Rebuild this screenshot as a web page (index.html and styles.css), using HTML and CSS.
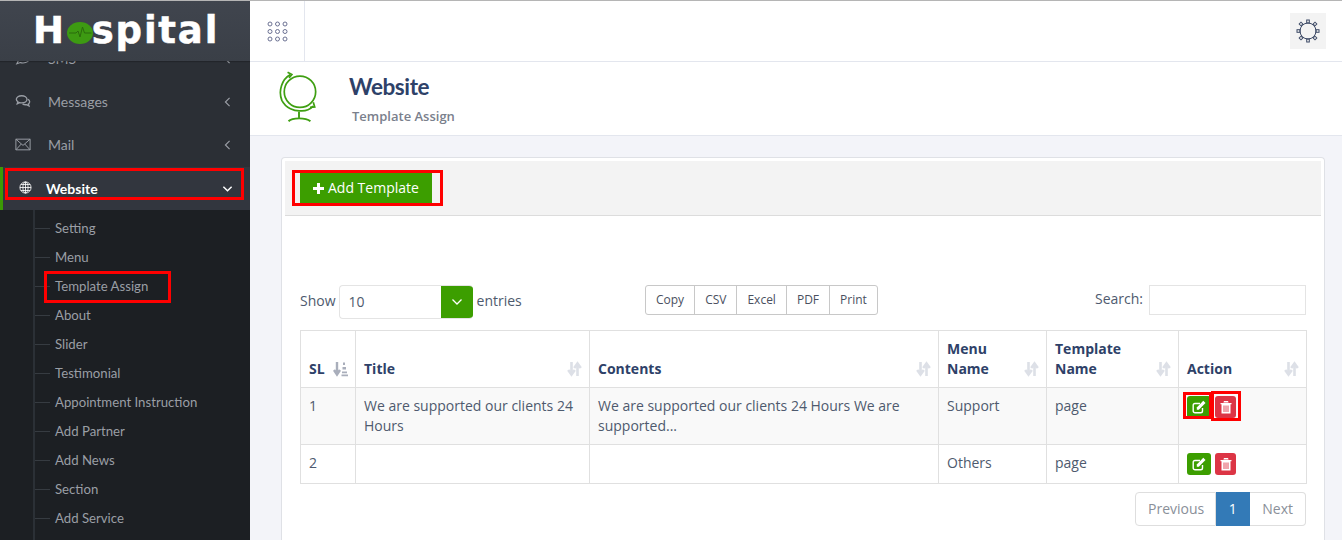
FILE: index.html
```html
<!DOCTYPE html>
<html lang="en">
<head>
<meta charset="utf-8">
<title>Website - Template Assign</title>
<link rel="stylesheet" href="styles.css">
</head>
<body>
<svg class="defs" width="0" height="0" aria-hidden="true">
  <symbol id="sort" viewBox="0 0 15 16">
    <path d="M4.500 1v11M1.200 9l3.300 4.500L7.800 9M10.500 15V4M7.200 7l3.300-4.500L13.800 7" fill="none" stroke="currentColor" stroke-width="2.600"/>
  </symbol>
  <symbol id="sort-on" viewBox="0 0 15 16">
    <path d="M4 1v11M1 9l3 4.500L7 9" fill="none" stroke="currentColor" stroke-width="2.400"/>
    <path d="M10 1.500h2v2.500h-2zM9.500 6h3.500v2.500H9.500zM9 10.500h5v1.800H9zM8.500 13.500h6.500v1.800H8.500z" fill="currentColor"/>
  </symbol>
  <symbol id="edit" viewBox="0 0 14 14">
    <path d="M10.500 8v3a1.800 1.800 0 0 1-1.800 1.800H3A1.800 1.800 0 0 1 1.200 11V5.300A1.800 1.800 0 0 1 3 3.500h5" fill="none" stroke="currentColor" stroke-width="1.400"/>
    <path d="M4.800 7.500 11.300.8l2.200 2.200-6.700 6.700H4.800z" fill="currentColor"/>
  </symbol>
  <symbol id="trash" viewBox="0 0 14 14">
    <path d="M1.500 3h11v1.200h-1V13.500h-9V4.200h-1zM5 1h4l.6 1.500H4.400z" fill="currentColor"/>
    <path d="M5 5.500v6.500M7 5.500v6.500M9 5.500v6.500" stroke="#dc3545" stroke-width=".9"/>
  </symbol>
</svg>
<div class="app">
  <aside class="sidebar">
    <div class="logo">
      <span class="logo-text">H</span>
      <svg class="logo-dot" viewBox="0 0 26 22" preserveAspectRatio="none"><ellipse cx="13" cy="11" rx="13" ry="11" fill="#3d9a12"/><path d="M2 11h7l2-2 2 6 2.500-10 2 6h7" fill="none" stroke="#2a6b0c" stroke-width="1"/></svg>
      <span class="logo-text logo-rest">spital</span>
    </div>
    <nav class="nav">
      <div class="nav-item">
        <svg class="nav-icon" viewBox="0 0 18 16"><path d="M9 2c4 0 7.500 2 7.500 5.500S13 13 9 13c-1 0-2 0-3-.5L2 14l1.500-3C2 10 1.500 9 1.500 7.500 1.500 4 5 2 9 2z" fill="none" stroke="currentColor" stroke-width="1.200"/></svg>
        <span class="nav-label">SMS</span>
        <svg class="nav-caret" viewBox="0 0 8 12"><path d="M6.500 1 1.500 6l5 5" fill="none" stroke="currentColor" stroke-width="1.400"/></svg>
      </div>
      <div class="nav-item">
        <svg class="nav-icon" viewBox="0 0 18 16"><path d="M7.500 1.500c3.300 0 6 1.700 6 4s-2.700 4-6 4c-.8 0-1.500-.1-2.200-.3L2.500 10.500l.8-2.200C2 7.500 1.500 6.500 1.500 5.500c0-2.300 2.700-4 6-4z" fill="none" stroke="currentColor" stroke-width="1.500"/><path d="M14.500 5.500c1.300.7 2 1.700 2 2.900 0 1-.6 1.900-1.500 2.500l.7 2.100-2.800-1.400c-1.600.2-3.200-.1-4.400-.9" fill="none" stroke="currentColor" stroke-width="1.500"/></svg>
        <span class="nav-label">Messages</span>
        <svg class="nav-caret" viewBox="0 0 8 12"><path d="M6.500 1 1.500 6l5 5" fill="none" stroke="currentColor" stroke-width="1.400"/></svg>
      </div>
      <div class="nav-item">
        <svg class="nav-icon" viewBox="0 0 18 14"><path d="M1 1h16v12H1zM1 1l8 7 8-7M1 13l6-6.500M17 13l-6-6.500" fill="none" stroke="currentColor" stroke-width="1.100"/></svg>
        <span class="nav-label">Mail</span>
        <svg class="nav-caret" viewBox="0 0 8 12"><path d="M6.500 1 1.500 6l5 5" fill="none" stroke="currentColor" stroke-width="1.400"/></svg>
      </div>
      <div class="nav-item nav-active">
        <svg class="nav-icon nav-globe" viewBox="0 0 14 14"><g fill="none" stroke="currentColor" stroke-width=".9"><circle cx="7" cy="7" r="6"/><ellipse cx="7" cy="7" rx="2.800" ry="6"/><path d="M1 7h12M2 3.800h10M2 10.200h10M7 1v12"/></g></svg>
        <span class="nav-label">Website</span>
        <svg class="nav-caret nav-down" viewBox="0 0 12 8"><path d="M1.500 1.500 6 6l4.500-4.500" fill="none" stroke="currentColor" stroke-width="1.600"/></svg>
        <span class="mark mark-website"></span>
      </div>
      <ul class="subnav">
        <li>Setting</li>
        <li>Menu</li>
        <li>Template Assign<span class="mark mark-assign"></span></li>
        <li>About</li>
        <li>Slider</li>
        <li>Testimonial</li>
        <li>Appointment Instruction</li>
        <li>Add Partner</li>
        <li>Add News</li>
        <li>Section</li>
        <li>Add Service</li>
      </ul>
    </nav>
  </aside>
  <div class="main">
    <header class="topbar">
      <div class="apps">
        <svg class="apps-icon" viewBox="0 0 21 21"><g fill="none" stroke="#6c7293" stroke-width="1"><circle cx="3" cy="3" r="2"/><circle cx="10.500" cy="3" r="2"/><circle cx="18" cy="3" r="2"/><circle cx="3" cy="10.500" r="2"/><circle cx="10.500" cy="10.500" r="2"/><circle cx="18" cy="10.500" r="2"/><circle cx="3" cy="18" r="2"/><circle cx="10.500" cy="18" r="2"/><circle cx="18" cy="18" r="2"/></g></svg>
      </div>
      <div class="settings">
        <svg class="settings-icon" viewBox="0 0 24 24"><g fill="none" stroke="#3d4a66" stroke-width="1"><circle cx="12" cy="12" r="8"/><rect x="10.700" y="1" width="2.600" height="3"/><rect x="10.700" y="20" width="2.600" height="3"/><rect x="1" y="10.700" width="3" height="2.600"/><rect x="20" y="10.700" width="3" height="2.600"/><rect x="3.700" y="3.700" width="2.600" height="2.600" transform="rotate(45 5 5)"/><rect x="17.700" y="3.700" width="2.600" height="2.600" transform="rotate(45 19 5)"/><rect x="3.700" y="17.700" width="2.600" height="2.600" transform="rotate(45 5 19)"/><rect x="17.700" y="17.700" width="2.600" height="2.600" transform="rotate(45 19 19)"/></g></svg>
      </div>
    </header>
    <section class="page-head">
      <svg class="page-icon" viewBox="0 0 42 52"><g fill="none" stroke="#3f9f12" stroke-width="1.800"><circle cx="22" cy="21" r="16.500"/><path d="M12 3C3 8-1 20 3 30c4 8 13 12 21 11 5 0 9-2 12-5"/><path d="M9 .5l4.500 2.500-3 3.500M36 32l1.500 5-5 .5"/><path d="M21 42v6M10 52c4-4 18-4 23 0" stroke-width="2"/></g></svg>
      <div class="page-titles">
        <h1 class="page-title">Website</h1>
        <p class="page-sub">Template Assign</p>
      </div>
    </section>
    <section class="content">
      <div class="card">
        <div class="card-head">
          <button class="btn-add"><svg class="plus" viewBox="0 0 11 11"><path d="M4 0h3v4h4v3H7v4H4V7H0V4h4z" fill="currentColor"/></svg>Add Template<span class="mark mark-add"></span></button>
        </div>
        <div class="card-body">
          <div class="tools">
            <div class="length">
              <span class="lbl">Show</span>
              <div class="select"><span class="select-value">10</span><span class="select-arrow"><svg viewBox="0 0 12 8"><path d="M1.500 1.500 6 6l4.500-4.500" fill="none" stroke="currentColor" stroke-width="1.300"/></svg></span></div>
              <span class="lbl">entries</span>
            </div>
            <div class="exports">
              <span class="export">Copy</span><span class="export">CSV</span><span class="export">Excel</span><span class="export">PDF</span><span class="export">Print</span>
            </div>
            <div class="search"><span class="lbl">Search:</span><span class="search-input"></span></div>
          </div>
          <table class="grid">
            <thead>
              <tr>
                <th class="c-sl">SL<svg class="sort sort-on"><use href="#sort-on"/></svg></th>
                <th class="c-title">Title<svg class="sort"><use href="#sort"/></svg></th>
                <th class="c-contents">Contents<svg class="sort"><use href="#sort"/></svg></th>
                <th class="c-menu">Menu<br>Name<svg class="sort"><use href="#sort"/></svg></th>
                <th class="c-template">Template<br>Name<svg class="sort"><use href="#sort"/></svg></th>
                <th class="c-action">Action<svg class="sort"><use href="#sort"/></svg></th>
              </tr>
            </thead>
            <tbody>
              <tr class="odd">
                <td>1</td>
                <td>We are supported our clients 24 Hours</td>
                <td>We are supported our clients 24 Hours We are supported...</td>
                <td>Support</td>
                <td>page</td>
                <td>
                  <div class="actions">
                    <span class="act act-edit"><svg><use href="#edit"/></svg><span class="mark mark-edit"></span></span>
                    <span class="act act-del"><svg><use href="#trash"/></svg><span class="mark mark-del"></span></span>
                  </div>
                </td>
              </tr>
              <tr>
                <td>2</td>
                <td></td>
                <td></td>
                <td>Others</td>
                <td>page</td>
                <td>
                  <div class="actions">
                    <span class="act act-edit"><svg><use href="#edit"/></svg></span>
                    <span class="act act-del"><svg><use href="#trash"/></svg></span>
                  </div>
                </td>
              </tr>
            </tbody>
          </table>
          <div class="pager">
            <span class="page-btn">Previous</span><span class="page-btn page-on">1</span><span class="page-btn">Next</span>
          </div>
        </div>
      </div>
    </section>
  </div>
</div>
</body>
</html>
```

FILE: styles.css
```css
* { box-sizing: border-box; }
html, body { margin: 0; height: 540px; overflow: hidden; }
body { font-family: "Open Sans", "Liberation Sans", sans-serif; font-size: 14px; color: #4e5a6e; background: #fff; }
.defs { position: absolute; }
.app { display: flex; height: 540px; overflow: hidden; border-top: 1px solid #b5b5b5; }

.sidebar { width: 250px; flex: none; background: #2b2f35; overflow: hidden; display: flex; flex-direction: column; }
.logo { height: 60px; flex: none; display: flex; align-items: center; padding-left: 33px; background: linear-gradient(#40454e, #3a3f47); position: relative; z-index: 1; box-shadow: 0 1px 1px rgba(0,0,0,.2); }
.logo-text { font-family: "DejaVu Sans", sans-serif; font-weight: 700; font-size: 37px; line-height: 40px; letter-spacing: .8px; color: #fff; -webkit-text-stroke: .5px #fff; }
.logo-rest { letter-spacing: 1.800px; }
.logo-dot { width: 26px; height: 22px; margin: 4px -1px 0 2px; flex: none; }
.nav { flex: 1; min-height: 0; display: flex; flex-direction: column; margin-top: -24px; font-family: Lato, sans-serif; font-size: 14px; overflow: hidden; }
.nav-item { height: 43px; flex: none; display: flex; align-items: center; padding: 0 19px 0 15px; color: #9a9ea5; position: relative; }
.nav-icon { width: 16px; height: 15px; flex: none; margin-right: 17px; }
.nav-label { flex: 1; }
.nav-caret { width: 7px; height: 10px; flex: none; }
.nav-active { margin-top: 1px; background: #32363e; color: #fff; font-weight: 700; border-left: 3px solid #3c9a05; padding-left: 16px; padding-right: 17px; }
.nav-active .nav-label { margin-bottom: 1px; }
.nav-globe { width: 13px; height: 13px; margin-right: 14px; margin-top: -2px; }
.nav-down { width: 11px; height: 8px; }
.subnav { flex: 1; list-style: none; margin: 0; padding: 4px 0 0 33px; background: #1c1f23; position: relative; color: #9a9ea5; overflow: hidden; }
.subnav::before { content: ""; position: absolute; left: 33px; top: 0; bottom: 0; width: 2px; background: #2b3036; }
.subnav li { height: 29px; line-height: 29px; padding-left: 22px; position: relative; white-space: nowrap; font-size: 13.200px; }
.subnav li::before { content: ""; position: absolute; left: 2px; top: 14px; width: 15px; height: 1px; background: #363b41; }

.mark { position: absolute; border: 3px solid #f00; pointer-events: none; }
.mark-website { left: 2px; top: 1px; width: 239px; height: 32px; }
.mark-assign { left: 11px; top: -1px; width: 127px; height: 32px; }
.mark-add { left: -8px; top: -2px; width: 151px; height: 36px; }
.mark-edit { left: -4px; top: -4px; width: 29px; height: 27px; }
.mark-del { left: -4px; top: -5px; width: 30px; height: 30px; }

.main { flex: 1; min-width: 0; display: flex; flex-direction: column; background: #f3f4f9; }
.topbar { height: 61px; flex: none; display: flex; justify-content: space-between; align-items: center; background: #fff; border-bottom: 1px solid #e3e6ee; padding-right: 16px; }
.apps { width: 55px; height: 60px; display: flex; align-items: center; justify-content: center; border-right: 1px solid #e3e6ee; }
.apps-icon { width: 21px; height: 21px; }
.settings { width: 36px; height: 36px; display: flex; align-items: center; justify-content: center; background: #f3f3f3; }
.settings-icon { width: 24px; height: 24px; }
.page-head { height: 74px; flex: none; display: flex; background: #fff; border-bottom: 1px solid #e3e6ee; padding: 8px 0 0 29px; }
.page-icon { width: 40px; height: 53px; flex: none; }
.page-titles { margin-left: 29px; }
.page-title { margin: 2px 0 0 1px; font-family: Lato, sans-serif; font-size: 22.500px; letter-spacing: -.4px; line-height: 30px; font-weight: 700; color: #2e4168; }
.page-sub { margin: 4px 0 0 4px; font-size: 13px; line-height: 20px; font-weight: 600; color: #7a808c; }

.content { flex: 1; padding: 21px 17px 0 31px; min-height: 0; display: flex; flex-direction: column; }
.card { flex: 1; min-height: 0; background: #fff; border: 1px solid #dfe1e6; border-bottom: 0; border-radius: 4px 4px 0 0; padding: 3px 3px 0; }
.card-head { height: 55px; background: #f3f3f3; border-bottom: 1px solid #dcdcdc; padding: 11px 0 0 15px; }
.btn-add { position: relative; display: flex; align-items: center; width: 132px; height: 32px; border: 0; background: #3c9e00; color: #fff; padding: 0 0 0 13px; font: 14px/32px "Open Sans", sans-serif; }
.plus { width: 11px; height: 11px; margin-right: 4px; }
.card-body { padding: 69px 15px 0; }
.tools { display: grid; grid-template-columns: 345px auto 1fr; align-items: start; height: 45px; }
.length { display: flex; align-items: center; gap: 3px; height: 34px; }
.lbl { margin-bottom: 4px; }
.select { display: flex; width: 134px; height: 34px; margin-right: 1px; border: 1px solid #e4e4e4; border-right: 0; border-radius: 4px; overflow: hidden; }
.select-value { flex: 1; padding-left: 9px; line-height: 32px; }
.select-arrow { width: 32px; background: #3c9e00; color: #fff; display: flex; align-items: center; justify-content: center; }
.select-arrow svg { width: 12px; height: 8px; }
.exports { display: flex; height: 30px; border: 1px solid #c8c8c8; border-radius: 3px; font-size: 12px; color: #4a5060; }
.export { padding: 0 10px; line-height: 28px; border-left: 1px solid #c8c8c8; }
.export:first-child { border-left: 0; }
.search { display: flex; justify-content: flex-end; align-items: center; gap: 6px; height: 30px; }
.search-input { width: 157px; height: 30px; border: 1px solid #e4e4e4; }

.grid { width: 1006px; table-layout: fixed; border-collapse: collapse; line-height: 20px; }
.grid th, .grid td { border: 1px solid #e0e0e0; padding: 8px; vertical-align: top; text-align: left; position: relative; }
.grid th { vertical-align: bottom; font-weight: 700; color: #2e4168; }
.c-sl { width: 55px; }
.c-title { width: 234px; }
.c-contents { width: 349px; }
.c-menu { width: 108px; }
.c-template { width: 132px; }
.c-action { width: 128px; }
.sort { position: absolute; right: 7px; bottom: 10px; width: 15px; height: 16px; color: #dde0e7; }
.sort-on { color: #a9aebb; }
.odd { background: #f9f9f9; }
.actions { display: flex; gap: 4px; }
.act { position: relative; display: flex; align-items: center; justify-content: center; height: 22px; border-radius: 3px; color: #fff; }
.act svg { width: 14px; height: 14px; }
.act-edit { width: 24px; background: #3c9e00; }
.act-del { width: 21px; background: #dc3545; }
.pager { display: flex; justify-content: flex-end; margin-top: 8px; }
.page-btn { height: 34px; padding: 0 12px; line-height: 32px; color: #8a8f99; border: 1px solid #dedede; border-left: 0; background: #fff; }
.page-btn:first-child { border-left: 1px solid #dedede; border-radius: 4px 0 0 4px; padding-right: 11px; }
.page-btn:last-child { border-radius: 0 4px 4px 0; }
.page-on { background: #337ab7; border-color: #337ab7; color: #fff; width: 34px; padding: 0; text-align: center; }
```
